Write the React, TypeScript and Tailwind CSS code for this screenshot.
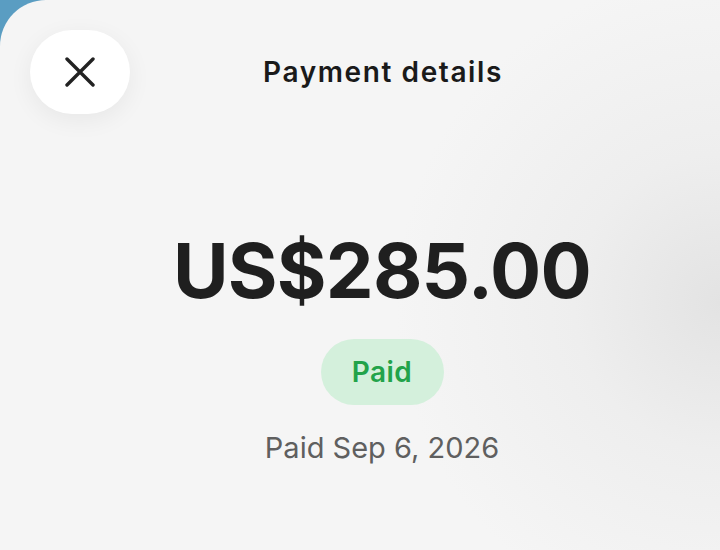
export default function App() {
  return (
    <div className="w-[720px] h-[550px] overflow-hidden bg-[#5a9dc2]" style={{ fontFamily: "Inter, 'Noto Sans', sans-serif" }}>
      <div className="w-full h-full rounded-tl-[46px] bg-[#f5f5f5] bg-[radial-gradient(ellipse_45%_60%_at_100%_55%,#e3e3e3_0%,#eeeeee_45%,#f5f5f5_100%)] flex flex-col">
        {/* header */}
        <div className="flex items-center pt-[30px] pl-[30px] pr-[84px]">
          <button className="w-[100px] h-[84px] rounded-full bg-white shadow-[0_6px_24px_rgba(0,0,0,0.06)] flex items-center justify-center text-[#222]">
            <svg width="30" height="30" viewBox="0 0 30 30" fill="none" stroke="currentColor" strokeWidth="3.4" strokeLinecap="round">
              <path d="M2 2 L28 28 M28 2 L2 28" />
            </svg>
          </button>
          <h1 className="flex-1 text-center text-[28px] font-semibold text-[#1a1a1a] tracking-[1.6px]">
            Payment details
          </h1>
        </div>

        {/* amount */}
        <div className="flex flex-col items-center pl-[44px] mt-[118px]">
          <div className="text-[76px] leading-none font-bold text-[#1f1f1f] tracking-[-0.01em]">US$285.00</div>
          <div className="mt-[31px] w-[123px] h-[66px] rounded-full bg-[#d4f0dc] flex items-center justify-center text-[28px] font-semibold text-[#22a34a] tracking-[0.5px]">
            Paid
          </div>
          <div className="mt-[28px] text-[29px] leading-none text-[#5f5f5f]">Paid Sep 6, 2026</div>
        </div>
      </div>
    </div>
  );
}
